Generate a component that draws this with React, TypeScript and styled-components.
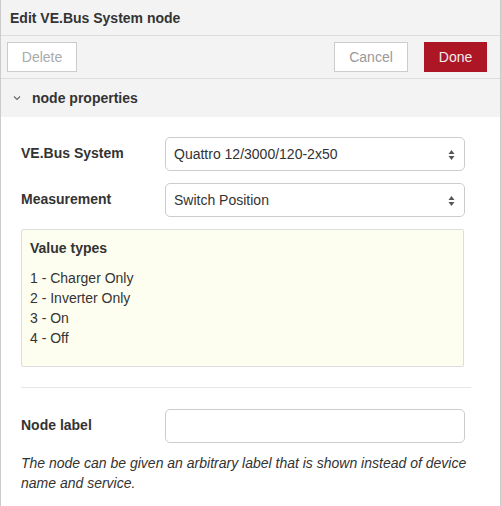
import React from "react";
import styled, { createGlobalStyle } from "styled-components";

const Global = createGlobalStyle`
  html, body { margin: 0; padding: 0; background: #fff; }
  body { font-family: "Liberation Sans", Arial, Helvetica, sans-serif; font-size: 14px; color: #333; }
  * { box-sizing: border-box; }
`;

const Tray = styled.div`
  width: 501px;
  height: 506px;
  border-left: 1px solid #ccc;
  border-right: 1px solid #ccc;
  background: #fff;
  display: flex;
  flex-direction: column;
  overflow: hidden;
`;

const Header = styled.div`
  height: 36px;
  background: #f3f3f3;
  border-bottom: 1px solid #ddd;
  display: flex;
  align-items: center;
  padding-left: 9px;
  font-weight: bold;
  font-size: 14px;
  color: #333;
`;

const Toolbar = styled.div`
  height: 43px;
  background: #f3f3f3;
  border-bottom: 1px solid #ddd;
  display: flex;
  align-items: center;
  padding: 0 13px 1px 6px;
`;

const Spacer = styled.div`
  flex: 1;
`;

const Button = styled.button<{ $primary?: boolean; $w: number; $muted?: string }>`
  width: ${(p) => p.$w}px;
  height: 30px;
  font-family: inherit;
  font-size: 14px;
  border-radius: 0;
  border: 1px solid ${(p) => (p.$primary ? "#AD1625" : "#ccc")};
  background: ${(p) => (p.$primary ? "#AD1625" : "#fff")};
  color: ${(p) => (p.$primary ? "#eee" : p.$muted || "#999")};
  padding: 0;
  margin-left: ${(p) => (p.$primary ? "16px" : "0")};
`;

const SectionHeader = styled.div`
  height: 38px;
  background: #f3f3f3;
  display: flex;
  align-items: center;
  padding-left: 12px;
  font-weight: bold;
  font-size: 14px;
  color: #333;
  gap: 11px;
`;

const Body = styled.div`
  padding: 20px 0 0 20px;
  display: flex;
  flex-direction: column;
`;

const Row = styled.div<{ $mb: number }>`
  display: flex;
  align-items: center;
  margin-bottom: ${(p) => p.$mb}px;
`;

const Label = styled.label`
  width: 144px;
  font-weight: bold;
  color: #333;
  margin-top: -2px;
`;

const SelectBox = styled.div`
  position: relative;
  width: 300px;
  height: 34px;
  border: 1px solid #ccc;
  border-radius: 5px;
  display: flex;
  align-items: center;
  padding-left: 8px;
  color: #333;
  background: #fff;
`;

const Arrows = styled.svg`
  position: absolute;
  right: 9px;
  top: 12px;
`;

const Input = styled.div`
  width: 300px;
  height: 34px;
  border: 1px solid #ccc;
  border-radius: 5px;
  background: #fff;
`;

const Tips = styled.div`
  width: 443px;
  height: 138px;
  background: #fefef0;
  border: 1px solid #ddd;
  border-radius: 2px;
  padding: 8px 8px;
  color: #333;
  line-height: 20px;
`;

const TipsTitle = styled.div`
  font-weight: bold;
  margin-bottom: 10px;
`;

const Divider = styled.div`
  width: 450px;
  height: 1px;
  background: #e6e6e6;
  margin: 20px 0 21px;
`;

const Help = styled.div`
  font-style: italic;
  line-height: 20px;
  width: 450px;
  margin-top: 10px;
  color: #333;
`;

const Select = ({ value }: { value: string }) => (
  <SelectBox>
    {value}
    <Arrows width="7" height="10" viewBox="0 0 7 10">
      <path d="M0.5 4 L3.5 0 L6.5 4 Z" fill="#555" />
      <path d="M0.5 6 L3.5 10 L6.5 6 Z" fill="#555" />
    </Arrows>
  </SelectBox>
);

export default function App() {
  return (
    <>
      <Global />
      <Tray>
        <Header>Edit VE.Bus System node</Header>
        <Toolbar>
          <Button $w={70} $muted="#aaa">Delete</Button>
          <Spacer />
          <Button $w={74}>Cancel</Button>
          <Button $w={63} $primary>Done</Button>
        </Toolbar>
        <SectionHeader>
          <svg width="8" height="6" viewBox="0 0 8 6">
            <path d="M1 1.5 L4 4.5 L7 1.5" stroke="#666" strokeWidth="1.1" fill="none" />
          </svg>
          node properties
        </SectionHeader>
        <Body>
          <Row $mb={12}>
            <Label>VE.Bus System</Label>
            <Select value="Quattro 12/3000/120-2x50" />
          </Row>
          <Row $mb={12}>
            <Label>Measurement</Label>
            <Select value="Switch Position" />
          </Row>
          <Tips>
            <TipsTitle>Value types</TipsTitle>
            <div>1 - Charger Only</div>
            <div>2 - Inverter Only</div>
            <div>3 - On</div>
            <div>4 - Off</div>
          </Tips>
          <Divider />
          <Row $mb={0}>
            <Label>Node label</Label>
            <Input />
          </Row>
          <Help>
            The node can be given an arbitrary label that is shown instead of device name and service.
          </Help>
        </Body>
      </Tray>
    </>
  );
}
